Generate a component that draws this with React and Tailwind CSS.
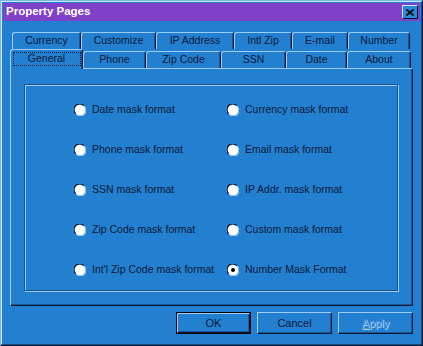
import React from 'react';

const topTabs = [
  { label: 'Currency', w: 'w-[69px]' },
  { label: 'Customize', w: 'w-[75px]' },
  { label: 'IP Address', w: 'w-[78px]' },
  { label: 'Intl Zip', w: 'w-[58px]' },
  { label: 'E-mail', w: 'w-[56px]' },
  { label: 'Number', w: 'w-[62px]' },
];

const frontTabs = [
  { label: 'Phone', w: 'w-[63px]' },
  { label: 'Zip Code', w: 'w-[75px]' },
  { label: 'SSN', w: 'w-[65px]' },
  { label: 'Date', w: 'w-[61px]' },
  { label: 'About', w: 'w-[64px]' },
];

const options = [
  ['Date mask format', 'Currency mask format'],
  ['Phone mask format', 'Email mask format'],
  ['SSN mask format', 'IP Addr. mask format'],
  ['Zip Code mask format', 'Custom mask format'],
  ["Int'l Zip Code mask format", 'Number Mask Format'],
];

const Radio = ({ checked, label }) => (
  <div className="flex items-center gap-[6px]">
    <svg width="12" height="12" viewBox="0 0 12 12" className="shrink-0">
      <circle cx="6" cy="6" r="5.5" fill="#ffffff" />
      <path d="M1.6 9.6 A5 5 0 0 1 9.6 1.6" fill="none" stroke="#0a1838" strokeWidth="1.2" />
      <path d="M10.4 2.4 A5 5 0 0 1 2.4 10.4" fill="none" stroke="#8ec4f2" strokeWidth="1.2" />
      {checked && <circle cx="6" cy="6" r="2" fill="#000000" />}
    </svg>
    <span className="whitespace-nowrap">{label}</span>
  </div>
);

const Tab = ({ label, w }) => (
  <div
    className={`${w} h-[17px] flex items-center justify-center rounded-t-[3px] border-t border-l border-r border-t-[#9ccdf6] border-l-[#9ccdf6] border-r-[#08162e] shadow-[inset_-1px_0_0_#1b5797]`}
  >
    {label}
  </div>
);

const Button = ({ children, isDefault, disabled }) => (
  <div className={`w-[75px] h-[22px] ${isDefault ? 'border border-black' : ''}`}>
    <div
      className={`w-full h-full flex items-center justify-center border border-t-[#9ccdf6] border-l-[#9ccdf6] border-r-[#08162e] border-b-[#08162e] shadow-[inset_-1px_-1px_0_#1b5797] ${disabled ? 'text-[#4f93d8] [text-shadow:1px_1px_0_#a8d6ff]' : ''}`}
    >
      {children}
    </div>
  </div>
);

export default function App() {
  return (
    <div
      className="w-[423px] h-[346px] bg-[#2380d0] border border-t-[#7fb6e6] border-l-[#7fb6e6] border-r-[#08162e] border-b-[#08162e] text-[#0a1838] text-[10.5px]"
      style={{ fontFamily: '"Liberation Sans", Arial, sans-serif' }}
    >
      <div className="h-full border border-t-[#c8e6ff] border-l-[#c8e6ff] border-r-[#164c88] border-b-[#164c88] p-[1px] flex flex-col">
        {/* title bar */}
        <div className="h-[18px] bg-[#8040c8] flex items-center justify-between pl-[3px] pr-[2px]">
          <span className="text-white font-bold text-[11.5px]">Property Pages</span>
          <div className="w-[16px] h-[14px] bg-[#2a86d6] border border-t-[#c8e6ff] border-l-[#c8e6ff] border-r-[#08162e] border-b-[#08162e] flex items-center justify-center">
            <svg width="8" height="7" viewBox="0 0 8 7">
              <path d="M0.5 0.5 L7.5 6.5 M7.5 0.5 L0.5 6.5" stroke="#000" strokeWidth="1.6" />
            </svg>
          </div>
        </div>

        {/* tabs */}
        <div className="mt-[11px] ml-[9px] flex">
          {topTabs.map((t) => (
            <Tab key={t.label} {...t} />
          ))}
        </div>
        <div className="ml-[7px] flex items-end h-[19px]">
          <div className="relative z-10 w-[73px] h-[20px] -mb-[1px] bg-[#2380d0] flex items-start justify-center pt-[2px] rounded-t-[3px] border-t border-l border-r border-t-[#9ccdf6] border-l-[#9ccdf6] border-r-[#08162e] shadow-[inset_-1px_0_0_#1b5797]">
            <span className="border border-dotted border-[#0a1838] w-[68px] h-[14px] flex items-center justify-center">
              General
            </span>
          </div>
          {frontTabs.map((t) => (
            <Tab key={t.label} {...t} />
          ))}
        </div>

        {/* panel */}
        <div className="ml-[7px] w-[403px] h-[238px] border border-t-[#9ccdf6] border-l-[#9ccdf6] border-r-[#08162e] border-b-[#08162e] shadow-[inset_-1px_-1px_0_#1b5797] pt-[15px] pl-[13px]">
          <div className="w-[374px] h-[207px] border border-[#175496] shadow-[inset_1px_1px_0_#9ccdf6,1px_1px_0_#9ccdf6] pt-[5px] pl-[49px]">
            {options.map(([a, b], i) => (
              <div key={a} className="grid grid-cols-[153px_1fr] h-[40px] items-center">
                <Radio label={a} />
                <Radio label={b} checked={i === 4} />
              </div>
            ))}
          </div>
        </div>

        {/* buttons */}
        <div className="mt-[6px] ml-[173px] flex gap-[6px] text-[11px]">
          <Button isDefault>OK</Button>
          <Button>Cancel</Button>
          <Button disabled>
            <span>
              <span className="underline">A</span>pply
            </span>
          </Button>
        </div>
      </div>
    </div>
  );
}
